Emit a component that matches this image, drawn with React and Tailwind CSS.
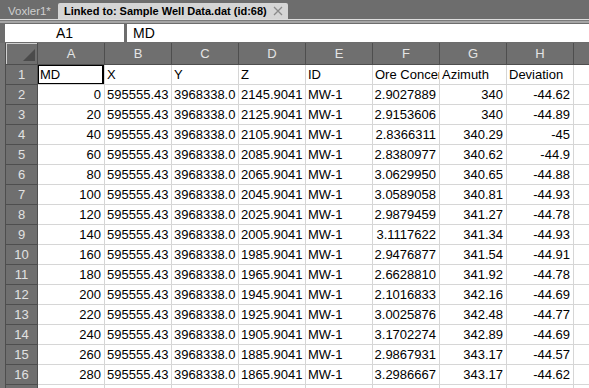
import React from "react";

const cols = ["A", "B", "C", "D", "E", "F", "G", "H"];
const heads = ["MD", "X", "Y", "Z", "ID", "Ore Concentration", "Azimuth", "Deviation"];

const ore = ["2.9027889", "2.9153606", "2.8366311", "2.8380977", "3.0629950", "3.0589058", "2.9879459", "3.1117622", "2.9476877", "2.6628810", "2.1016833", "3.0025876", "3.1702274", "2.9867931", "3.2986667"];
const azi = ["340", "340", "340.29", "340.62", "340.65", "340.81", "341.27", "341.34", "341.54", "341.92", "342.16", "342.48", "342.89", "343.17", "343.17"];
const dev = ["-44.62", "-44.89", "-45", "-44.9", "-44.88", "-44.93", "-44.78", "-44.93", "-44.91", "-44.78", "-44.69", "-44.77", "-44.69", "-44.57", "-44.62"];

const rows = ore.map((o, i) => [
  { v: String(i * 20), r: true },
  { v: "595555.43" },
  { v: "3968338.0" },
  { v: (2145.9041 - i * 20).toFixed(4) },
  { v: "MW-1" },
  { v: o, r: true },
  { v: azi[i], r: true },
  { v: dev[i], r: true },
]);

function RowHead({ n }) {
  return (
    <div className="w-[32px] h-[20px] shrink-0 border-r border-b border-[#4e4e4e] bg-[#6f6f6f] text-[#e2e2e2] text-[13px] leading-[19px] text-center">
      {n}
    </div>
  );
}

function Cell({ v, r, sel }) {
  return (
    <div
      className={`relative w-[67px] h-[20px] shrink-0 border-r border-b border-[#d6d6d6] bg-white overflow-hidden whitespace-nowrap text-[13px] leading-[19px] text-black ${r ? "text-right pr-[3px]" : "pl-[2px]"}`}
    >
      {v}
      {sel && <div className="absolute -left-px -top-px w-[67px] h-[21px] border-2 border-black" />}
    </div>
  );
}

export default function App() {
  return (
    <div className="w-[589px] h-[388px] overflow-hidden bg-[#6d6d6d] flex flex-col font-['Liberation_Sans',Arial,sans-serif]">
      <div className="h-[19px] flex items-end shrink-0">
        <div className="w-[58px] h-[16px] pl-[8px] text-[11.5px] leading-[16px] text-[#cfcfcf]">
          Voxler1*
        </div>
        <div className="relative w-[230px] h-[16px] shrink-0 overflow-hidden bg-[#d5d5d5] rounded-t-[2px] pl-[6px] flex items-center">
          <span className="text-[11px] font-bold text-black leading-[16px] whitespace-nowrap">
            Linked to: Sample Well Data.dat (id:68)
          </span>
          <svg width="10" height="10" viewBox="0 0 10 10" className="absolute right-[5px] top-[3px]">
            <path d="M1 1L9 9M9 1L1 9" stroke="#8a8a8a" strokeWidth="1.3" />
          </svg>
        </div>
      </div>
      <div className="h-px bg-[#dcdcdc] shrink-0" />
      <div className="h-px bg-[#7a7a7a] shrink-0" />
      <div className="h-[2px] bg-[#a5a5a5] shrink-0" />
      <div className="h-px bg-[#6d6d6d] shrink-0" />
      <div className="h-[18px] flex gap-[3px] pl-[5px] shrink-0">
        <div className="w-[119px] bg-white text-center text-[14px] leading-[18px] text-black">A1</div>
        <div className="flex-1 bg-white pl-[6px] text-[14px] leading-[18px] text-black">MD</div>
      </div>
      <div className="h-px shrink-0" />
      <div className="flex flex-1 min-h-0">
        <div className="w-[6px] shrink-0 border-r border-[#4e4e4e] bg-[#767676]" />
        <div className="flex-1 flex flex-col min-w-0">
          <div className="h-[22px] flex shrink-0">
            <div className="relative w-[32px] h-[22px] shrink-0 border-r border-b border-[#4e4e4e] bg-[#6f6f6f]">
              <div className="absolute left-0 top-0 right-0 bottom-0 border-l border-t border-[#d0d0d0]" />
              <svg width="12" height="12" viewBox="0 0 12 12" className="absolute right-[2px] bottom-[3px]">
                <polygon points="12,0 12,12 0,12" fill="#4b4b4b" />
              </svg>
            </div>
            {cols.map((c) => (
              <div key={c} className="w-[67px] h-[22px] shrink-0 border-r border-b border-[#4e4e4e] bg-[#6f6f6f] text-center text-[13px] leading-[21px] text-[#e4e4e4]">
                {c}
              </div>
            ))}
            <div className="flex-1 h-[22px] border-b border-[#4e4e4e] bg-[#6f6f6f]" />
          </div>
          <div className="flex shrink-0">
            <RowHead n={1} />
            {heads.map((h, j) => (
              <Cell key={h} v={h} sel={j === 0} />
            ))}
            <div className="flex-1 h-[20px] border-b border-[#d6d6d6] bg-white" />
          </div>
          {rows.map((r, i) => (
            <div key={i} className="flex shrink-0">
              <RowHead n={i + 2} />
              {r.map((c, j) => (
                <Cell key={j} v={c.v} r={c.r} />
              ))}
              <div className="flex-1 h-[20px] border-b border-[#d6d6d6] bg-white" />
            </div>
          ))}
          <div className="flex shrink-0">
            <RowHead n={17} />
            {cols.map((c) => (
              <Cell key={c} v="" />
            ))}
            <div className="flex-1 h-[20px] bg-white" />
          </div>
        </div>
      </div>
    </div>
  );
}
